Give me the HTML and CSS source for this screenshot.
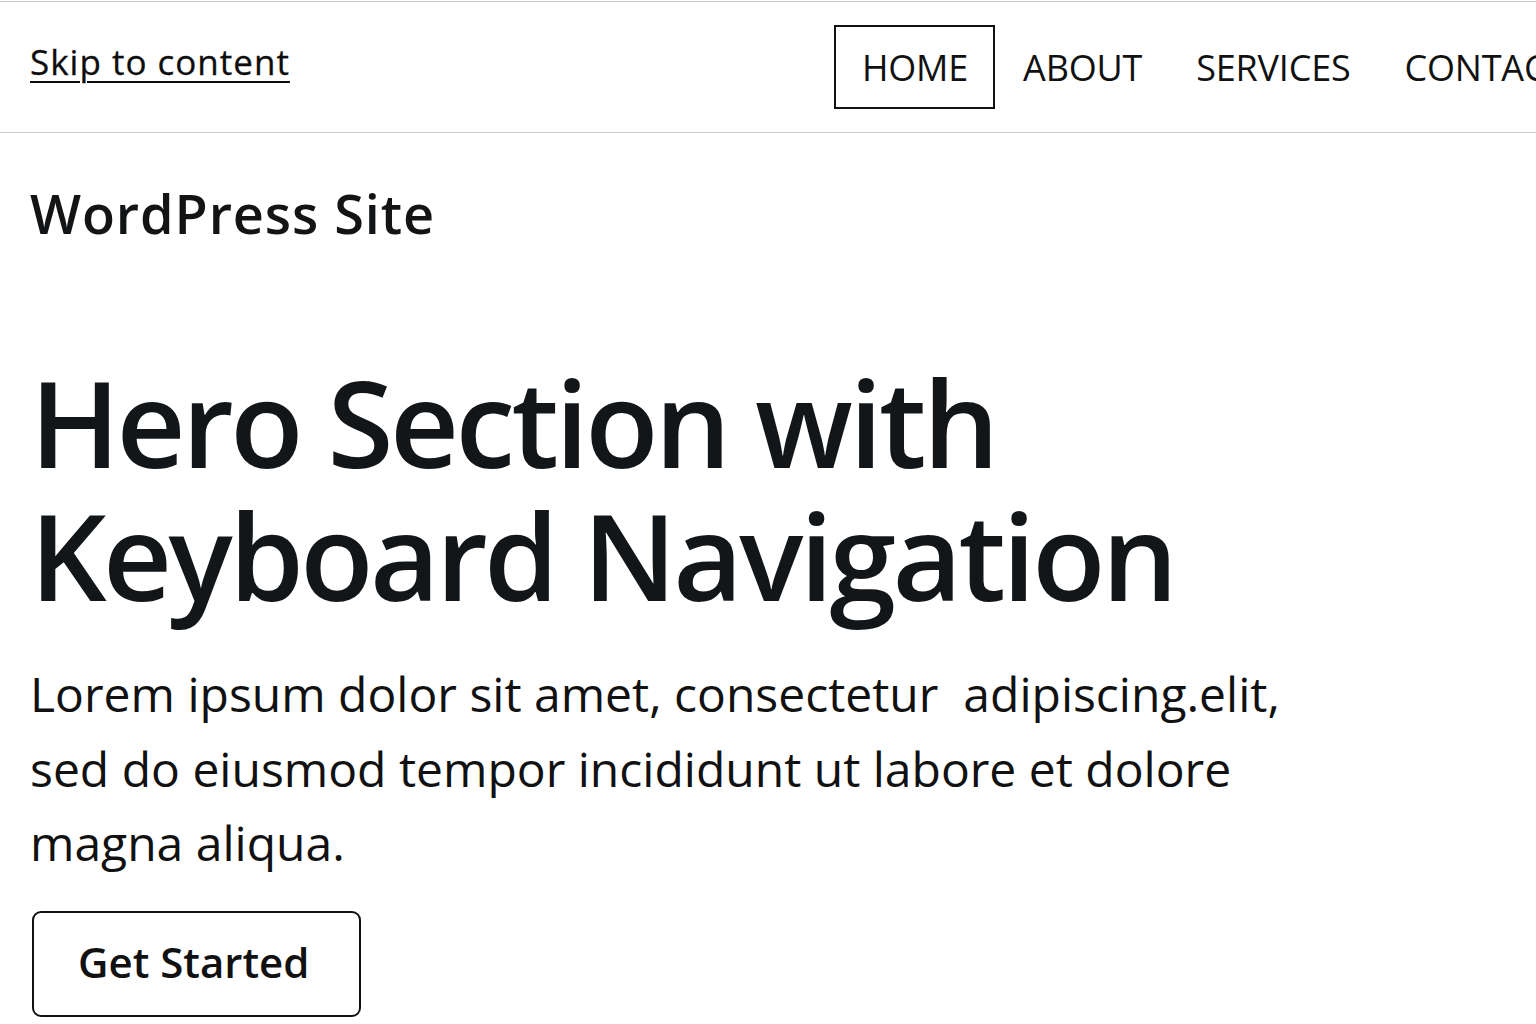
FILE: index.html
```html
<!DOCTYPE html>
<html lang="en">
<head>
<meta charset="utf-8">
<title>WordPress Site</title>
<link rel="stylesheet" href="styles.css">
</head>
<body>
<header class="site-header">
  <a class="skip-link" href="#content">Skip to content</a>
  <nav class="main-nav" aria-label="Main">
    <a class="nav-link is-focused" href="#">HOME</a>
    <a class="nav-link" href="#">ABOUT</a>
    <a class="nav-link" href="#">SERVICES</a>
    <a class="nav-link" href="#">CONTACT</a>
  </nav>
</header>
<main id="content" class="content">
  <p class="site-title">WordPress Site</p>
  <section class="hero">
    <h1 class="hero-title">Hero Section with Keyboard Navigation</h1>
    <p class="hero-text">Lorem ipsum dolor sit amet, consectetur&nbsp; adipiscing.elit, sed do eiusmod tempor incididunt ut labore et dolore magna aliqua.</p>
    <a class="hero-button" href="#">Get Started</a>
  </section>
</main>
</body>
</html>
```
FILE: styles.css
```css
html, body {
  margin: 0;
  padding: 0;
  background: #ffffff;
}

body {
  font-family: "Open Sans", "Noto Sans", sans-serif;
  color: #111314;
  overflow: hidden;
}

.site-header {
  margin-top: 1px;
  border-top: 1px solid #c9c9c9;
  border-bottom: 1px solid #c9c9c9;
  height: 130px;
  display: flex;
  align-items: center;
  padding-left: 30px;
  white-space: nowrap;
  overflow: hidden;
}

.skip-link {
  font-size: 35px;
  letter-spacing: 1px;
  line-height: 48px;
  color: #0d0d0d;
  text-decoration: underline;
  text-decoration-thickness: 2px;
  text-underline-offset: 6px;
  margin-bottom: 10px;
  -webkit-text-stroke: 0.3px #0d0d0d;
}

.main-nav {
  display: flex;
  align-items: center;
  margin-left: auto;
  margin-right: -56px;
  flex-shrink: 0;
}

.nav-link {
  display: flex;
  align-items: center;
  height: 80px;
  padding: 0 24px 0 26px;
  border: 2px solid transparent;
  font-size: 36px;
  letter-spacing: -0.2px;
  color: #111;
  text-decoration: none;
}

.nav-link.is-focused {
  padding-right: 25px;
  border-color: #111;
}

.content {
  padding-left: 30px;
}

.site-title {
  margin: 48px 0 0;
  font-size: 54px;
  line-height: 64px;
  font-weight: 600;
  letter-spacing: 0.9px;
  color: #121416;
}

.hero {
  margin-top: 110px;
}

.hero-title {
  margin: 0;
  font-size: 120px;
  line-height: 133px;
  font-weight: 600;
  letter-spacing: -3.6px;
  color: #131618;
  max-width: 1250px;
}

.hero-text {
  margin: 36px 0 0;
  font-size: 48px;
  line-height: 74.5px;
  max-width: 1300px;
  color: #111;
}

.hero-button {
  display: inline-block;
  margin-top: 30px;
  margin-left: 2px;
  padding: 24px 50px 28px 44px;
  border: 2px solid #111;
  border-radius: 9px;
  font-size: 42px;
  line-height: 50px;
  font-weight: 600;
  color: #111;
  text-decoration: none;
}
```
